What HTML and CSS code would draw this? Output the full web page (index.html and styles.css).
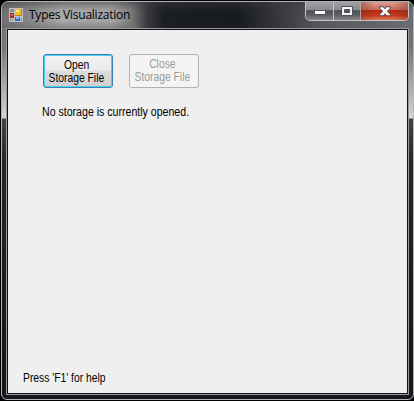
FILE: index.html
```html
<!DOCTYPE html>
<html lang="en">
<head>
<meta charset="utf-8">
<title>Types Visualization</title>
<link rel="stylesheet" href="styles.css">
</head>
<body>
<div class="window">
  <header class="titlebar">
    <svg class="app-icon" width="14" height="14" viewBox="0 0 14 14" shape-rendering="crispEdges">
      <path fill="#c0c0c0" d="M0 0h14v14H0z"/>
      <path fill="#8c8c90" d="M1 1h4v3H1zM1 11h1v2H1zM3 11h1v2H3zM12 10h1v3h-1z"/>
      <path fill="#a82818" d="M1 5h4v5H1z"/><path fill="#e86050" d="M2 6h2v2H2z"/>
      <path fill="#b98208" d="M6 1h7v7H6z"/><path fill="#f5bd28" d="M6 1h6v6H6z"/><path fill="#ffe68a" d="M7 2h3v2H7z"/>
      <path fill="#3468c8" d="M6 9h5v4H6z"/><path fill="#80b4ff" d="M7 9h3v2H7z"/>
    </svg>
    <h1 class="title">Types Visualization</h1>
    <div class="controls">
      <span class="control minimize"><svg width="12" height="6" viewBox="0 0 12 6"><path d="M.5 .5h11v4H.5z" fill="#fff" stroke="#50525c"/></svg></span>
      <span class="control maximize"><svg width="13" height="11" viewBox="0 0 13 11"><path fill-rule="evenodd" d="M.5 .5h11v9H.5zM3.500 3.500v3h5v-3z" fill="#f4f4f4" stroke="#50525c"/></svg></span>
      <span class="control close"><svg width="12" height="11" viewBox="0 0 12 11"><path d="M.7.7h3.600L6 2.800 7.700.7h3.600v1.800L8.300 5.300l3 2.900v1.600H7.700L6 7.800 4.300 9.800H.7V8.200l3-2.900-3-2.800z" fill="#f5f5f5" stroke="#554450"/></svg></span>
    </div>
  </header>
  <main class="client">
    <div class="buttons">
      <button class="button focused"><span class="label">Open</span><span class="label">Storage File</span></button>
      <button class="button" disabled><span class="label">Close</span><span class="label">Storage File</span></button>
    </div>
    <p class="status">No storage is currently opened.</p>
    <p class="help">Press 'F1' for help</p>
  </main>
</div>
</body>
</html>
```
FILE: styles.css
```css
* { box-sizing: border-box; }
body {
  margin: 0;
  height: 401px;
  padding: 1px 0 1px 1px;
  background: #000;
  overflow: hidden;
  font-family: "Liberation Sans", Arial, sans-serif;
}
.window {
  width: 413px;
  height: 399px;
  display: flex;
  flex-direction: column;
  padding: 0 5px 5px;
  border: 1px solid #b4b2b4;
  border-radius: 7px 7px 6px 6px;
  background:
    linear-gradient(#6c6c6e 0, #77777a 45px, #d8d4d4 116px, #444347 117px, #25282b 160px, #1b1c20 280px, #15171c) 0 0 / 5px 100% no-repeat,
    linear-gradient(#626265 0, #747476 45px, #d8d6d6 116px, #444347 117px, #25282b 160px, #1b1c20 280px, #15171c) 100% 0 / 5px 100% no-repeat,
    #171a1f;
}
.titlebar {
  display: flex;
  height: 26px;
  margin: 0 -5px;
  padding-left: 7px;
  border-radius: 6px 6px 0 0;
  background:
    linear-gradient(rgba(60,60,65,.5), transparent 9px),
    linear-gradient(transparent 19px, rgba(100,100,103,.5)) 0 0 / 130px 100% no-repeat,
    linear-gradient(90deg, #6f6f72 0, #858587 25px, #a8a8a8 60px, #a4a4a4 110px, #77787a 130px, #37393d 145px, #1b1e22 162px, #171a1f 235px, #3d3e42 285px, #58595d 320px, #6b6c6f 100%);
}
.app-icon { margin-top: 6px; flex: none; }
.title {
  margin: 4px 0 0 6px;
  font: 400 12px/18px "Open Sans", "Noto Sans", sans-serif;
  letter-spacing: -.24px;
  white-space: nowrap;
  color: #000;
}
.controls {
  display: flex;
  width: 104px;
  height: 20px;
  margin: -1px 4px 0 auto;
  border: 1px solid #c4c4c6;
  border-top-color: #aaaaad;
  border-radius: 0 0 5px 5px;
  overflow: hidden;
  flex: none;
}
.control {
  display: flex;
  justify-content: center;
  align-items: center;
  background: linear-gradient(#a0a1a4, #898a8e 45%, #4a4c51 48%, #626368 75%, #85868a);
}
.minimize { width: 28px; border-right: 1px solid #c4c4c6; padding-top: 4px; }
.maximize { width: 27px; border-right: 1px solid #b8a5a4; }
.close {
  flex: 1;
  background:
    linear-gradient(90deg, rgba(120,45,35,.4), transparent 30%, transparent 70%, rgba(120,45,35,.4)),
    linear-gradient(#dba092, #c96a58 43%, #b42c13 47%, #c93a1c 75%, #dc7a58);
}
.client {
  flex: 1;
  display: flex;
  flex-direction: column;
  align-items: flex-start;
  border: 1px solid #111215;
  outline: 1px solid #99999b;
  margin: 1px 0 0;
  padding: 24px 0 8px;
  background: #efefef;
}
.buttons { display: flex; gap: 16px; margin-left: 35px; }
.button {
  display: flex;
  flex-direction: column;
  justify-content: center;
  align-items: center;
  width: 70px;
  height: 34px;
  padding: 0 3px 0 0;
  border: 1px solid #adb2b5;
  border-radius: 3px;
  background: #f4f4f4;
  font: 12px/13px "Liberation Sans", Arial, sans-serif;
  white-space: nowrap;
  color: #9b9b9b;
}
.label { transform: scaleX(.86); }
.focused {
  border-color: #3c7fb1;
  background: linear-gradient(#f2f2f2, #ebebeb 48%, #dddddd 50%, #cfcfcf);
  box-shadow: inset 0 0 0 1px #48d0f5;
  color: #000;
  padding-top: 2px;
}
.status, .help {
  margin: 0;
  font-size: 12px;
  line-height: 14px;
  color: #000;
  white-space: nowrap;
  transform-origin: 0 0;
}
.status { margin: 17px 0 0 34px; transform: scaleX(.882); }
.help { margin: auto 0 0 15px; transform: scaleX(.86); }
```
